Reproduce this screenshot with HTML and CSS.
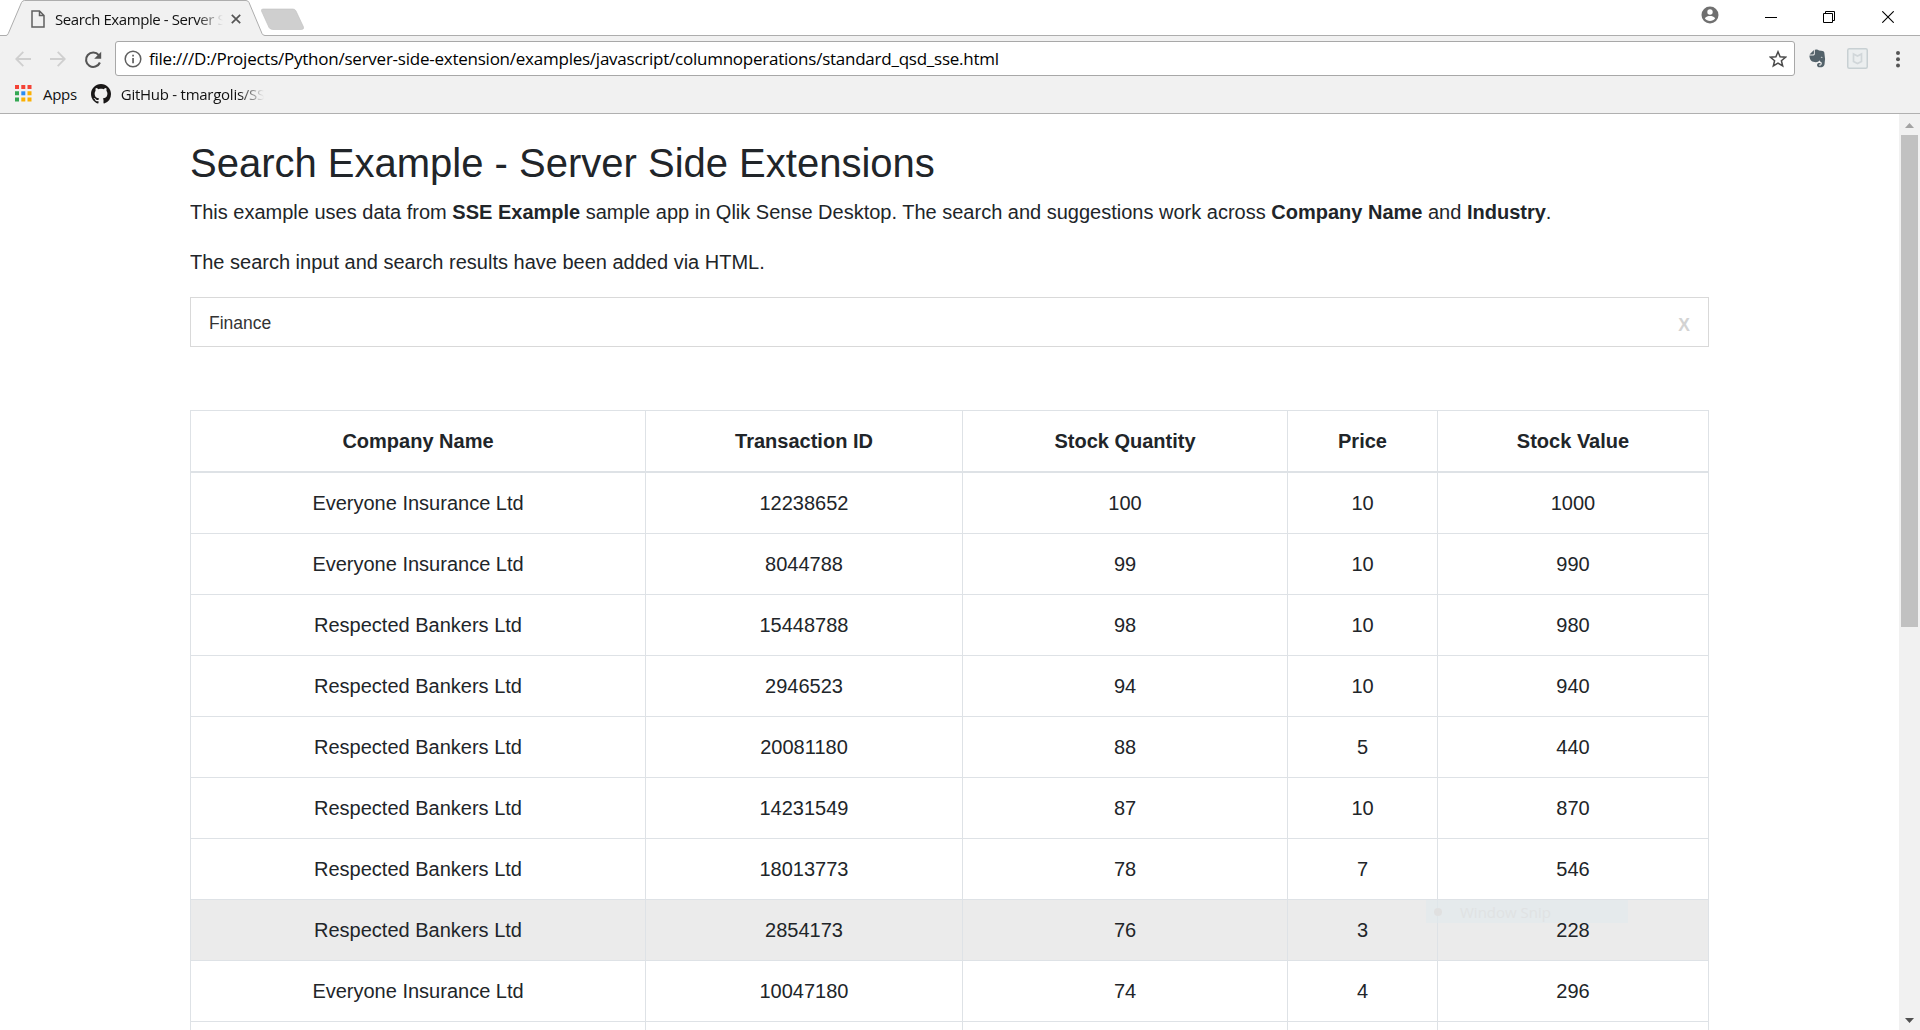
FILE: index.html
```html
<!DOCTYPE html>
<html lang="en">
<head>
<meta charset="utf-8">
<title>Search Example - Server Side Extensions</title>
<link rel="stylesheet" href="styles.css">
</head>
<body>
<header class="chrome">
  <div class="tabstrip">
    <svg class="tab-shape" width="310" height="36" viewBox="0 0 310 36">
      <path d="M0 35.500H6Q7.500 35.500 8.300 33.500L21.500 2.500Q22.500 .5 24.500 .5H246Q248 .5 249 2.500L262 33.500Q263 35.500 265 35.500H310V36H0Z" fill="#f1f1f1"/>
      <path d="M0 35.500H6Q7.500 35.500 8.300 33.500L21.500 2.500Q22.500 .5 24.500 .5H246Q248 .5 249 2.500L262 33.500Q263 35.500 265 35.500H310" fill="none" stroke="#adadad"/>
      <path d="M263 9H293Q295 9 296 11L303.500 27Q304 29.500 301.500 29.500H273Q270 29.500 269 27.500L261.500 11Q261 9 263 9Z" fill="#cfcfcf" stroke="#c0c0c0" stroke-width=".6"/>
    </svg>
    <div class="tab">
      <svg width="14" height="18" viewBox="0 0 14 18"><path d="M1 1H8.500L13 5.500V17H1ZM8.500 1V5.500H13" fill="none" stroke="#606060" stroke-width="1.500"/></svg>
      <span class="tab-title">Search Example - Server Side</span>
      <svg class="tab-close" width="10" height="10" viewBox="0 0 10 10"><path d="M.8 .8L9.200 9.200M9.200 .8L.8 9.200" stroke="#555" stroke-width="1.700"/></svg>
    </div>
    <div class="window-buttons">
      <svg width="18" height="18" viewBox="0 0 18 18"><circle cx="9" cy="9" r="8.500" fill="#707070"/><circle cx="9" cy="6" r="2.700" fill="#fff"/><path d="M3.800 12.200C5 10.300 7 9.900 9 9.900S13 10.300 14.200 12.200C13 14 11 15 9 15S5 14 3.800 12.200Z" fill="#fff"/></svg>
      <svg class="win-min" width="12" height="12" viewBox="0 0 12 12"><path d="M0 5.500H12" stroke="#000"/></svg>
      <svg class="win-restore" width="12" height="12" viewBox="0 0 12 12"><path d="M.5 2.500H9.500V11.500H.5ZM2.500 2.500V.5H11.500V9.500H9.500" fill="none" stroke="#000"/></svg>
      <svg class="win-close" width="12" height="12" viewBox="0 0 12 12"><path d="M.3 .3L11.700 11.700M11.700 .3L.3 11.700" stroke="#000" stroke-width="1.100"/></svg>
    </div>
  </div>
  <div class="toolbar">
    <svg class="nav-back" width="16" height="16" viewBox="0 0 16 16"><path d="M16 8H1.500M8.300 .8L1.200 8L8.300 15.200" fill="none" stroke="#cfcfcf" stroke-width="1.800"/></svg>
    <svg class="nav-forward" width="16" height="16" viewBox="0 0 16 16"><path d="M0 8H14.500M7.700 .8L14.800 8L7.700 15.200" fill="none" stroke="#cfcfcf" stroke-width="1.800"/></svg>
    <svg class="nav-reload" width="18" height="18" viewBox="0 0 18 18"><path d="M14.800 4.200A7.200 7.200 0 1 0 15.900 11.500" fill="none" stroke="#555" stroke-width="2.100"/><path d="M17.200 .8V7.800H10.200Z" fill="#555"/></svg>
    <div class="omnibox">
      <svg width="18" height="18" viewBox="0 0 18 18"><circle cx="9" cy="9" r="7.800" fill="none" stroke="#5f5f5f" stroke-width="1.500"/><path d="M8.200 4.800H9.900V6.500H8.200ZM8.200 8H9.900V13.200H8.200Z" fill="#5f5f5f"/></svg>
      <span class="url">file:///D:/Projects/Python/server-side-extension/examples/javascript/columnoperations/standard_qsd_sse.html</span>
      <svg class="star" width="18" height="18" viewBox="0 0 18 18"><path d="M9 1.800L11.100 6.800L16.500 7.200L12.400 10.700L13.700 16L9 13.200L4.300 16L5.600 10.700L1.500 7.200L6.900 6.800Z" fill="none" stroke="#4a4a4a" stroke-width="1.500"/></svg>
    </div>
    <svg class="ext-elephant" width="17" height="19" viewBox="0 0 17 19"><path d="M.5 5.400L4.900 1V4.400Q4.900 5.400 3.900 5.400ZM5.800 .8Q8.500 0 10 1.500C13 1.700 15 1.700 15.300 3.500Q16.700 10 15.500 15.500C15 18.200 12 18.600 9.500 18.200C7.500 17.500 7.600 14.200 9.700 14H11.500V15.500H10.300Q9.300 16 10.300 16.600C12.500 17 13 15 12.700 13.500C11.500 13.200 11 12.200 10.300 11.300C9.500 13.500 6.500 13.500 4.300 12.800C1.500 12.200 .5 9 .4 6.400H4.500Q5.800 6.300 5.800 5Z" fill="#53626a"/><path d="M11.700 8.600Q12.300 6.600 13.700 8.900Q12.700 8.500 11.700 8.600Z" fill="#f1f1f1"/></svg>
    <svg class="ext-shield" width="21" height="21" viewBox="0 0 21 21"><rect x=".75" y=".75" width="19.500" height="19.500" rx="1.500" fill="#ebeeef" stroke="#c8d0d3" stroke-width="1.500"/><path d="M6.500 6L10.500 8L14.500 6V13.500L10.500 15.500L6.500 13.500Z" fill="none" stroke="#d0d6d9" stroke-width="1.700"/></svg>
    <svg class="menu-dots" width="4" height="17" viewBox="0 0 4 17"><g fill="#555"><circle cx="2" cy="2" r="2"/><circle cx="2" cy="8.300" r="2"/><circle cx="2" cy="14.600" r="2"/></g></svg>
  </div>
  <div class="bookmarks">
    <svg width="17" height="17" viewBox="0 0 17 17"><path d="M0 0H4V4H0ZM6.300 0H10.300V4H6.300ZM12.500 0H16.500V4H12.500Z" fill="#f44336"/><path d="M0 6.300H4V10.300H0ZM0 12.500H4V16.500H0Z" fill="#34a853"/><path d="M6.300 6.300H10.300V10.300H6.300Z" fill="#2a8cf4"/><path d="M12.500 6.300H16.500V10.300H12.500ZM6.300 12.500H10.300V16.500H6.300ZM12.500 12.500H16.500V16.500H12.500Z" fill="#fbb003"/></svg>
    <span class="apps">Apps</span>
    <svg class="github" width="20" height="20" viewBox="0 0 16 16"><path fill="#191717" d="M8 0C3.580 0 0 3.580 0 8c0 3.540 2.290 6.530 5.470 7.590.4.070.55-.17.55-.38 0-.19-.01-.82-.01-1.490-2.010.37-2.530-.49-2.690-.94-.09-.23-.48-.94-.82-1.130-.28-.15-.68-.52-.01-.53.63-.01 1.080.58 1.230.82.72 1.210 1.870.87 2.330.66.07-.52.28-.87.51-1.070-1.780-.2-3.640-.89-3.640-3.950 0-.87.31-1.590.82-2.150-.08-.2-.36-1.020.08-2.120 0 0 .67-.21 2.200.82.64-.18 1.320-.27 2-.27s1.360.09 2 .27c1.530-1.040 2.200-.82 2.200-.82.44 1.100.16 1.920.08 2.120.51.56.82 1.270.82 2.150 0 3.070-1.870 3.750-3.650 3.950.29.25.54.73.54 1.480 0 1.070-.01 1.930-.01 2.200 0 .21.15.46.55.38A8.010 8.010 0 0 0 16 8c0-4.420-3.580-8-8-8Z"/></svg>
    <span class="bookmark">GitHub - tmargolis/SSE</span>
  </div>
</header>
<div class="viewport">
  <main class="container">
    <h1>Search Example - Server Side Extensions</h1>
    <p>This example uses data from <b>SSE Example</b> sample app in Qlik Sense Desktop. The search and suggestions work across <b>Company Name</b> and <b>Industry</b>.</p>
    <p>The search input and search results have been added via HTML.</p>
    <div class="search"><span>Finance</span><span class="clear">X</span></div>
    <table class="results">
      <colgroup><col class="c-company"><col class="c-id"><col class="c-qty"><col class="c-price"><col class="c-value"></colgroup>
      <thead><tr><th>Company Name</th><th>Transaction ID</th><th>Stock Quantity</th><th>Price</th><th>Stock Value</th></tr></thead>
      <tbody>
        <tr><td>Everyone Insurance Ltd</td><td>12238652</td><td>100</td><td>10</td><td>1000</td></tr>
        <tr><td>Everyone Insurance Ltd</td><td>8044788</td><td>99</td><td>10</td><td>990</td></tr>
        <tr><td>Respected Bankers Ltd</td><td>15448788</td><td>98</td><td>10</td><td>980</td></tr>
        <tr><td>Respected Bankers Ltd</td><td>2946523</td><td>94</td><td>10</td><td>940</td></tr>
        <tr><td>Respected Bankers Ltd</td><td>20081180</td><td>88</td><td>5</td><td>440</td></tr>
        <tr><td>Respected Bankers Ltd</td><td>14231549</td><td>87</td><td>10</td><td>870</td></tr>
        <tr><td>Respected Bankers Ltd</td><td>18013773</td><td>78</td><td>7</td><td>546</td></tr>
        <tr class="hovered"><td>Respected Bankers Ltd</td><td>2854173</td><td>76</td><td>3</td><td class="snip-anchor"><div class="snip"><i></i>Window Snip</div>228</td></tr>
        <tr><td>Everyone Insurance Ltd</td><td>10047180</td><td>74</td><td>4</td><td>296</td></tr>
        <tr><td></td><td></td><td></td><td></td><td></td></tr>
      </tbody>
    </table>
  </main>
  <div class="scrollbar">
    <svg width="9" height="5" viewBox="0 0 9 5"><path d="M0 5L4.500 0L9 5Z" fill="#a3a3a3"/></svg>
    <div class="thumb"></div>
    <svg class="down" width="9" height="5" viewBox="0 0 9 5"><path d="M0 0L4.500 5L9 0Z" fill="#505050"/></svg>
  </div>
</div>
</body>
</html>
```
FILE: styles.css
```css
* { box-sizing: border-box; }
body {
  margin: 0;
  height: 1030px;
  overflow: hidden;
  display: flex;
  flex-direction: column;
  background: #fff;
  color: #212529;
  font: 20px/30px "Liberation Sans", Arial, sans-serif;
}
svg { display: block; flex: none; }

/* Browser frame */
.chrome {
  height: 114px;
  flex: none;
  background: #f1f1f1;
  border-bottom: 1px solid #b0b0b0;
  color: #111;
  font: 15px/20px "Open Sans", "Noto Sans", sans-serif;
  white-space: nowrap;
}
.tabstrip {
  position: relative;
  height: 36px;
  display: flex;
  justify-content: space-between;
  background: linear-gradient(#adadad, #adadad) bottom / 100% 1px no-repeat #fff;
}
.tab-shape { position: absolute; left: 0; top: 0; }
.tab { position: relative; display: flex; align-items: center; height: 36px; padding: 2px 0 0 31px; }
.tab-title {
  width: 168px;
  margin: -1px 0 0 10px;
  overflow: hidden;
  letter-spacing: -0.42px;
  -webkit-mask-image: linear-gradient(90deg, #000 142px, transparent 168px);
  mask-image: linear-gradient(90deg, #000 142px, transparent 168px);
}
.tab-close { margin-left: 8px; }
.window-buttons { display: flex; align-items: center; height: 30px; padding-right: 26px; }
.win-min { margin: 5px 0 0 46px; }
.win-restore { margin: 4px 0 0 46px; }
.win-close { margin: 4px 0 0 47px; }

.toolbar { height: 39px; display: flex; align-items: flex-start; padding: 5px 20px 0 15px; }
.nav-back, .nav-forward, .nav-reload { margin-top: 10px; }
.nav-forward { margin-left: 19px; }
.nav-reload { margin-left: 18px; }
.omnibox {
  flex: 1;
  display: flex;
  align-items: center;
  height: 35px;
  margin-left: 13px;
  padding: 0 7px 0 8px;
  background: #fff;
  border: 1px solid #a8a8a8;
  border-radius: 3px;
}
.url { margin-left: 7px; font-size: 17px; letter-spacing: -0.24px; color: #000; }
.star { margin-left: auto; }
.ext-elephant { margin: 8px 0 0 14px; }
.ext-shield { margin: 7px 0 0 21px; }
.menu-dots { margin: 10px 0 0 28px; }

.bookmarks { display: flex; align-items: center; height: 38px; padding: 0 0 1px 15px; }
.apps { margin-left: 11px; letter-spacing: -0.3px; }
.github { margin-left: 14px; }
.bookmark {
  width: 143px;
  margin-left: 10px;
  overflow: hidden;
  letter-spacing: -0.26px;
  -webkit-mask-image: linear-gradient(90deg, #000 118px, transparent 143px);
  mask-image: linear-gradient(90deg, #000 118px, transparent 143px);
}

/* Page content */
.viewport { flex: 1; min-height: 0; display: flex; justify-content: space-between; }
.container { width: 1519px; margin-left: 190px; padding-top: 25px; overflow: hidden; }
h1 { margin: 0 0 10px; font-size: 40px; line-height: 48px; font-weight: 400; }
p { margin: 0 0 20px; }
.search {
  display: flex;
  align-items: center;
  justify-content: space-between;
  height: 50px;
  margin-bottom: 63px;
  padding: 2px 18px 0;
  border: 1px solid #d9d9d9;
  color: #333;
  font-size: 17.5px;
}
.clear { color: #d3d3d3; font-weight: 700; padding-top: 3px; }
.results {
  width: 1519px;
  table-layout: fixed;
  border-collapse: separate;
  border-spacing: 0;
  border: solid #dee2e6;
  border-width: 1px 0 0 1px;
  text-align: center;
}
.c-company { width: 455px; }
.c-id { width: 317px; }
.c-qty { width: 325px; }
.c-price { width: 150px; }
.c-value { width: 271px; }
.results th, .results td {
  height: 61px;
  padding: 0;
  border: solid #dee2e6;
  border-width: 0 1px 1px 0;
}
.results th { height: 62px; border-bottom-width: 2px; }
.hovered { background: #ebebeb; }
.snip-anchor { position: relative; }
.snip {
  position: absolute;
  left: -12px;
  top: 0;
  width: 202px;
  height: 23px;
  padding-left: 34px;
  background: rgba(224, 233, 237, .5);
  color: #e0e2e3;
  font: 15px/24px "Open Sans", sans-serif;
  text-align: left;
}
.snip i { position: absolute; left: 8px; top: 8px; width: 8px; height: 8px; border-radius: 50%; background: #e0e0e0; }

.scrollbar {
  width: 21px;
  display: flex;
  flex-direction: column;
  align-items: center;
  padding: 9px 0 7px;
  background: #f1f1f1;
}
.thumb { width: 17px; height: 492px; margin-top: 7px; background: #c1c1c1; }
.down { margin-top: auto; }
```
